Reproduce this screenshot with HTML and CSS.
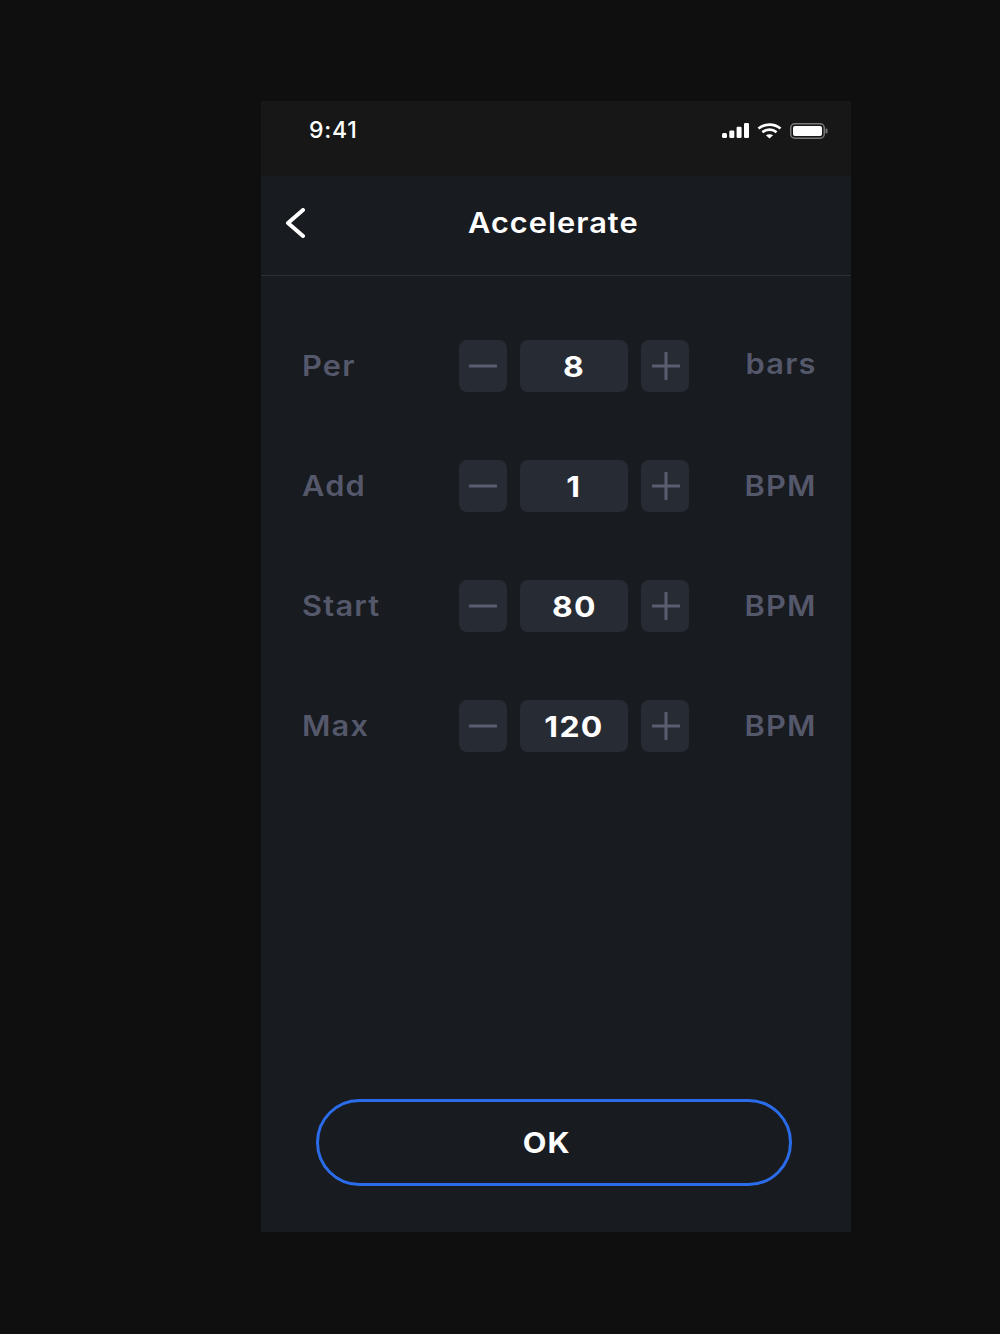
FILE: index.html
```html
<!DOCTYPE html>
<html lang="en">
<head>
  <meta charset="UTF-8">
  <title>Accelerate</title>
  <link rel="stylesheet" href="styles.css">
</head>
<body>

  <div class="phone">
    <div class="status-bar">
      <span class="time">9:41</span>
      <div class="status-icons">
        <svg width="27" height="15" viewBox="0 0 27 15"><rect x="0" y="10" width="5" height="5" rx="1.5"/><rect x="7.3" y="7.5" width="5" height="7.5" rx="1.2"/><rect x="14.6" y="3.7" width="5" height="11.3" rx="1.2"/><rect x="22" y="0" width="5" height="15" rx="1.2"/></svg>
        <svg width="25" height="16" viewBox="0 0 25 16" class="wifi"><path d="M1.5 5.6C7.6 .3 17.4 .3 23.5 5.6"/><path d="M5.4 9.2C9.4 5.8 15.6 5.8 19.6 9.2"/><path d="M12.5 15.5 8.9 12.3C10.9 10.8 14.1 10.8 16.1 12.3Z" class="wifi-dot"/></svg>
        <svg width="38" height="16" viewBox="0 0 38 16"><rect x=".75" y=".75" width="33.5" height="14.5" rx="4" class="batt-edge"/><rect x="3" y="3" width="29" height="10" rx="2"/><rect x="35.5" y="5.5" width="2" height="5" rx="1" class="batt-cap"/></svg>
      </div>
    </div>

    <div class="header">
      <svg class="back" width="22" height="30" viewBox="0 0 22 30"><path d="M19 2 4 15 19 28"/></svg>
      <h1>Accelerate</h1>
    </div>

    <div class="rows">
      <div class="row">
        <span class="label">Per</span>
        <div class="stepper">
          <div class="step"><svg width="28" height="28" viewBox="0 0 28 28"><path d="M1 14H27"/></svg></div>
          <div class="value"><span>8</span></div>
          <div class="step step-plus"><svg width="28" height="28" viewBox="0 0 28 28"><path d="M1 14H27M14 1V27"/></svg></div>
        </div>
        <span class="unit unit-lower">bars</span>
      </div>
      <div class="row">
        <span class="label">Add</span>
        <div class="stepper">
          <div class="step"><svg width="28" height="28" viewBox="0 0 28 28"><path d="M1 14H27"/></svg></div>
          <div class="value"><span>1</span></div>
          <div class="step step-plus"><svg width="28" height="28" viewBox="0 0 28 28"><path d="M1 14H27M14 1V27"/></svg></div>
        </div>
        <span class="unit">BPM</span>
      </div>
      <div class="row">
        <span class="label">Start</span>
        <div class="stepper">
          <div class="step"><svg width="28" height="28" viewBox="0 0 28 28"><path d="M1 14H27"/></svg></div>
          <div class="value"><span>80</span></div>
          <div class="step step-plus"><svg width="28" height="28" viewBox="0 0 28 28"><path d="M1 14H27M14 1V27"/></svg></div>
        </div>
        <span class="unit">BPM</span>
      </div>
      <div class="row">
        <span class="label">Max</span>
        <div class="stepper">
          <div class="step"><svg width="28" height="28" viewBox="0 0 28 28"><path d="M1 14H27"/></svg></div>
          <div class="value"><span>120</span></div>
          <div class="step step-plus"><svg width="28" height="28" viewBox="0 0 28 28"><path d="M1 14H27M14 1V27"/></svg></div>
        </div>
        <span class="unit">BPM</span>
      </div>
    </div>

    <button class="ok"><span>OK</span></button>
  </div>

</body>
</html>
```

FILE: styles.css
```css
* {
  margin: 0;
  padding: 0;
  box-sizing: border-box;
  font-family: Inter, 'Liberation Sans', sans-serif;
}

body {
  height: 1334px;
  background: #0f0f0f;
  padding: 101px 149px 0 261px;
  overflow: hidden;
}

.phone {
  width: 590px;
  height: 1131px;
  background: #181b1f;
  display: flex;
  flex-direction: column;
}

.status-bar {
  height: 75px;
  background: #171717;
  display: flex;
  align-items: flex-start;
  justify-content: space-between;
  padding: 15px 23px 0 48px;
  color: #fff;
}

.time {
  font-size: 23px;
  font-weight: 500;
  line-height: 29px;
  letter-spacing: 0.8px;
}

.status-icons {
  display: flex;
  align-items: center;
  gap: 8px;
  height: 29px;
}

.status-icons svg {
  fill: #fff;
}

.wifi path {
  fill: none;
  stroke: #fff;
  stroke-width: 2.6;
}

.wifi .wifi-dot {
  fill: #fff;
  stroke: none;
}

.status-icons .batt-edge {
  fill: none;
  stroke: #77787a;
  stroke-width: 1.5;
}

.status-icons .batt-cap {
  fill: #77787a;
}

.header {
  height: 100px;
  border-bottom: 1px solid #2d3035;
  display: flex;
  align-items: center;
  padding: 0 0 5px 23px;
}

.back path {
  fill: none;
  stroke: #fff;
  stroke-width: 4;
  stroke-linecap: round;
  stroke-linejoin: round;
}

/* the reference is stretched sideways, so the text gets the same stretch */
.header h1, .label, .unit, .value span, .ok span {
  display: inline-block;
  transform: scaleX(1.1);
}

.header h1 {
  margin-left: 162px;
  color: #fff;
  font-size: 28px;
  font-weight: 600;
  letter-spacing: 0.9px;
  white-space: nowrap;
  transform-origin: left center;
}

.rows {
  padding-top: 64px;
  display: flex;
  flex-direction: column;
  gap: 68px;
}

.row {
  height: 52px;
  display: flex;
  align-items: center;
  padding: 0 34px 0 41px;
}

.label, .unit {
  color: #55586b;
  font-size: 28px;
  font-weight: 600;
  letter-spacing: 1.1px;
}

.label {
  width: 157px;
  transform-origin: left center;
}

.unit {
  margin-left: auto;
  transform-origin: right center;
}

.unit-lower {
  margin-bottom: 5px;
}

.stepper {
  display: flex;
  gap: 13px;
}

.step {
  width: 48px;
  height: 52px;
  background: #272b34;
  border-radius: 8px;
  display: flex;
  align-items: center;
  justify-content: center;
}

.step-plus {
  padding-left: 2px;
}

.step svg path {
  fill: none;
  stroke: #5a5d70;
  stroke-width: 3;
  stroke-linecap: round;
}

.value {
  width: 108px;
  height: 52px;
  background: #272b34;
  border-radius: 8px;
  color: #fff;
  font-size: 29px;
  font-weight: 700;
  letter-spacing: 1.2px;
  display: flex;
  align-items: center;
  justify-content: center;
}

.ok {
  width: 476px;
  height: 87px;
  margin: auto 0 46px 55px;
  background: transparent;
  border: 3px solid #2a6cea;
  border-radius: 44px;
  color: #fff;
  font-size: 29px;
  font-weight: 700;
  letter-spacing: 1.2px;
  padding-right: 14px;
}

.ok span {
  transform: scaleX(1.06);
}
```
